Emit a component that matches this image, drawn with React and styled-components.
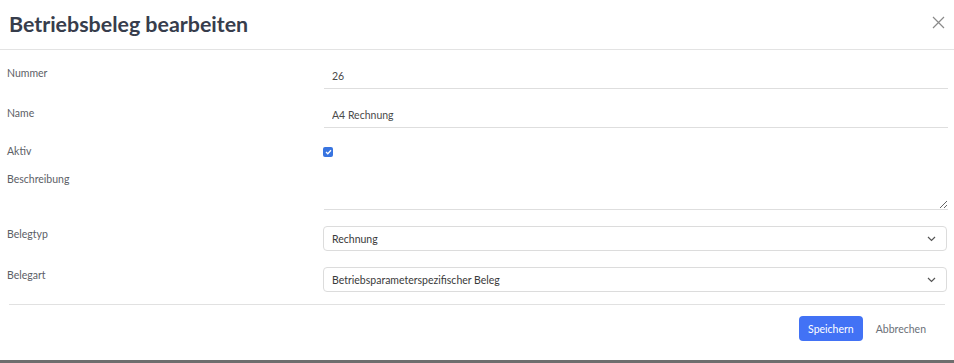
import React from "react";
import styled, { createGlobalStyle } from "styled-components";

const Global = createGlobalStyle`
  html, body { margin: 0; padding: 0; background: #ffffff; }
  body { font-family: Lato, "Noto Sans", sans-serif; }
  * { box-sizing: border-box; }
`;

const Modal = styled.div`
  width: 954px;
  height: 363px;
  background: #fff;
  border-bottom: 3px solid #6e6e6e;
  display: flex;
  flex-direction: column;
`;

const Header = styled.div`
  height: 50px;
  border-bottom: 1px solid #e3e3e3;
  display: flex;
  align-items: center;
  justify-content: space-between;
  padding: 0 8px 0 9px;
`;

const Title = styled.h2`
  margin: 0;
  margin-top: -2px;
  font-size: 21.4px;
  font-weight: 700;
  color: #373d4c;
`;

const CloseBtn = styled.button`
  border: 0;
  background: none;
  padding: 0;
  width: 14px;
  height: 14px;
  display: flex;
  margin-top: -3px;
  cursor: pointer;
`;

const Body = styled.div`
  padding: 14px 7px 0 7px;
  display: flex;
  flex-direction: column;
`;

const Row = styled.div`
  display: grid;
  grid-template-columns: 316px 1fr;
  align-items: start;
  margin-bottom: ${(p) => p.$gap}px;
`;

const Label = styled.label`
  font-size: 10.5px;
  line-height: 16px;
  color: #5c6066;
  padding-top: ${(p) => p.$pt}px;
`;

const TextInput = styled.input`
  width: 100%;
  height: 25px;
  border: 0;
  border-bottom: 1px solid #dedede;
  padding: 0 0 0 8px;
  margin-left: 1px;
  font-family: inherit;
  font-size: 10.5px;
  color: #4a4a4a;
  outline: none;
  background: transparent;
`;

const TextArea = styled.textarea`
  width: 100%;
  height: 39px;
  border: 0;
  border-bottom: 1px solid #dedede;
  padding: 4px 8px;
  margin-left: 1px;
  font-family: inherit;
  font-size: 10.5px;
  resize: vertical;
  outline: none;
  display: block;
`;

const CheckBox = styled.span`
  width: 10px;
  height: 10px;
  border-radius: 2px;
  background: #3874e0;
  display: flex;
  align-items: center;
  justify-content: center;
  margin-top: 4px;
`;

const SelectBox = styled.div`
  height: 25px;
  border: 1px solid #dcdcdc;
  border-radius: 4px;
  display: flex;
  align-items: center;
  justify-content: space-between;
  padding: 0 10px 0 8px;
  font-size: 10.5px;
  color: #3a3a3a;
`;

const Footer = styled.div`
  margin: 2px 9px 0;
  border-top: 1px solid #e1e1e1;
  display: flex;
  justify-content: flex-end;
  align-items: center;
  padding: 11px 19px 0 0;
  gap: 13px;
`;

const Button = styled.button`
  height: 25px;
  padding: 0 ${(p) => (p.$primary ? 9 : 0)}px;
  border: 0;
  border-radius: 4px;
  font-family: inherit;
  font-size: 10.5px;
  cursor: pointer;
  background: ${(p) => (p.$primary ? "#4272f5" : "transparent")};
  color: ${(p) => (p.$primary ? "#fff" : "#6b6f78")};
`;

const Chevron = () => (
  <svg width="9" height="6" viewBox="0 0 9 6" fill="none">
    <path d="M1 1l3.5 3.5L8 1" stroke="#555" strokeWidth="1.2" />
  </svg>
);

export default function App() {
  return (
    <>
      <Global />
      <Modal>
        <Header>
          <Title>Betriebsbeleg bearbeiten</Title>
          <CloseBtn aria-label="close">
            <svg width="13" height="13" viewBox="0 0 13 13">
              <path d="M1 1l11 11M12 1L1 12" stroke="#8a8a8a" strokeWidth="1.2" />
            </svg>
          </CloseBtn>
        </Header>
        <Body>
          <Row $gap={14}>
            <Label $pt={1}>Nummer</Label>
            <TextInput defaultValue="26" />
          </Row>
          <Row $gap={15}>
            <Label $pt={2}>Name</Label>
            <TextInput defaultValue="A4 Rechnung" />
          </Row>
          <Row $gap={12}>
            <Label $pt={0}>Aktiv</Label>
            <CheckBox>
              <svg width="7" height="6" viewBox="0 0 7 6">
                <path d="M1 3l1.8 1.8L6 1.2" stroke="#fff" strokeWidth="1.3" fill="none" />
              </svg>
            </CheckBox>
          </Row>
          <Row $gap={16}>
            <Label $pt={0}>Beschreibung</Label>
            <TextArea />
          </Row>
          <Row $gap={16}>
            <Label $pt={0}>Belegtyp</Label>
            <SelectBox>
              <span>Rechnung</span>
              <Chevron />
            </SelectBox>
          </Row>
          <Row $gap={10}>
            <Label $pt={0}>Belegart</Label>
            <SelectBox>
              <span>Betriebsparameterspezifischer Beleg</span>
              <Chevron />
            </SelectBox>
          </Row>
        </Body>
        <Footer>
          <Button $primary>Speichern</Button>
          <Button>Abbrechen</Button>
        </Footer>
      </Modal>
    </>
  );
}
